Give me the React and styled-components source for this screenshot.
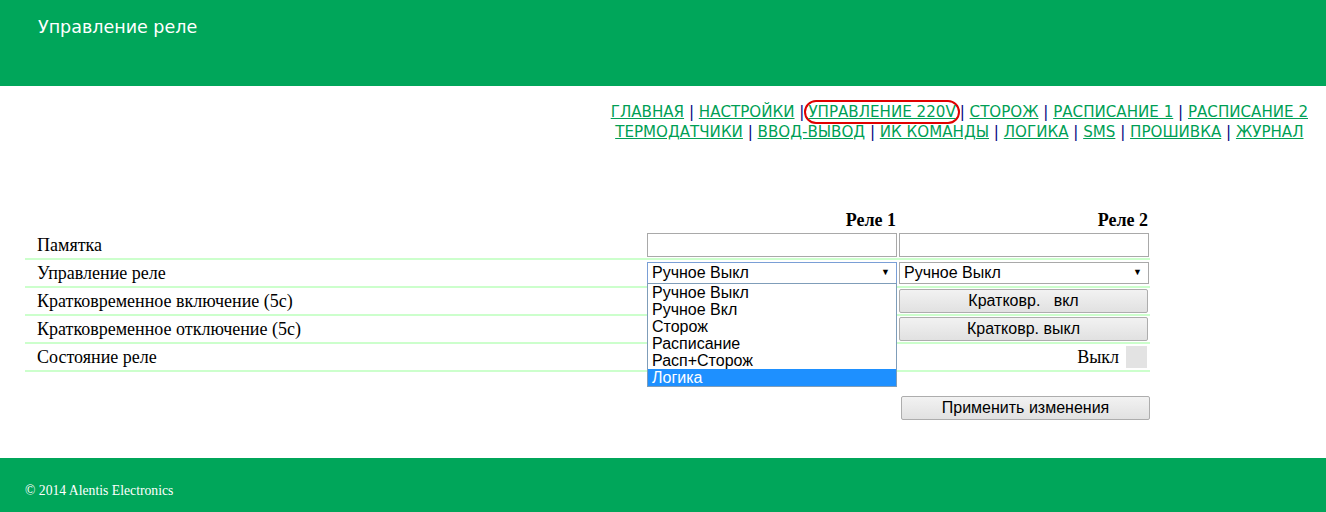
import React from "react";
import styled, { createGlobalStyle } from "styled-components";

const GREEN = "#00a65a";
const LINK = "#009f55";
const ROW_LINE = "#ccffcc";

const Global = createGlobalStyle`
  html, body { margin: 0; padding: 0; background: #fff; }
  body { font-family: "Liberation Serif", "Times New Roman", serif; color: #000; }
`;

const Page = styled.div`
  width: 1326px;
  min-height: 512px;
  display: flex;
  flex-direction: column;
`;

const Header = styled.header`
  height: 86px;
  background: ${GREEN};
  box-sizing: border-box;
  padding: 16px 0 0 38px;
`;

const Title = styled.h1`
  margin: 0;
  font-family: "DejaVu Sans", Tahoma, sans-serif;
  font-weight: normal;
  font-size: 17.5px;
  line-height: 22px;
  color: #fff;
`;

const NavWrap = styled.div`
  display: flex;
  justify-content: flex-end;
  padding: 16px 18px 0 0;
`;

const Nav = styled.nav`
  text-align: center;
  font-family: "DejaVu Sans", Tahoma, sans-serif;
  font-size: 15.1px;
  line-height: 20px;
  color: #000080;
`;

const NavLink = styled.a`
  color: ${LINK};
  text-decoration: underline;
  cursor: pointer;
  ${(p) =>
    p.$active &&
    `
    border: 2px solid #e00000;
    border-radius: 12px;
    padding: 1px 2px;
  `}
`;

const Sep = styled.span`
  color: #000080;
`;

const Main = styled.main`
  padding: 67px 0 0 25px;
  flex: 1;
`;

const Grid = styled.div`
  width: 1125px;
  display: grid;
  grid-template-columns: 621px 252px 252px;
`;

const Row = styled.div`
  display: contents;
`;

const Cell = styled.div`
  box-sizing: border-box;
  height: ${(p) => (p.$head ? "23px" : "28px")};
  border-bottom: ${(p) => (p.$head ? "0" : `2px solid ${ROW_LINE}`)};
  display: flex;
  align-items: center;
  justify-content: ${(p) => (p.$right ? "flex-end" : "flex-start")};
  padding: ${(p) => (p.$label ? "0 0 0 12px" : "0 1px")};
  font-size: 18px;
  position: relative;
`;

const HeadText = styled.span`
  font-weight: bold;
  font-size: 18px;
  padding-right: 1px;
`;

const TextInput = styled.input`
  box-sizing: border-box;
  width: 250px;
  height: 24px;
  border: 1px solid #a9a9a9;
  padding: 0 4px;
  font-family: "Liberation Sans", Arial, sans-serif;
  font-size: 16px;
  outline: none;
`;

const FakeSelect = styled.div`
  box-sizing: border-box;
  width: 250px;
  height: 22px;
  margin-top: -1px;
  border: 1px solid ${(p) => (p.$focus ? "#7a9fd6" : "#a9a9a9")};
  display: flex;
  align-items: center;
  justify-content: space-between;
  padding: 0 6px 0 4px;
  font-family: "Liberation Sans", Arial, sans-serif;
  font-size: 16px;
  background: #fff;
`;

const Arrow = styled.span`
  font-size: 9px;
  line-height: 1;
`;

const DropList = styled.ul`
  position: absolute;
  left: 1px;
  top: 23px;
  width: 250px;
  box-sizing: border-box;
  margin: 0;
  padding: 0;
  list-style: none;
  background: #fff;
  border: 1px solid #7f9db9;
  z-index: 5;
  font-family: "Liberation Sans", Arial, sans-serif;
  font-size: 16px;
`;

const Option = styled.li`
  height: 17px;
  line-height: 17px;
  padding: 0 4px;
  background: ${(p) => (p.$selected ? "#1e90ff" : "transparent")};
  color: ${(p) => (p.$selected ? "#fff" : "#000")};
`;

const Button = styled.button`
  box-sizing: border-box;
  width: 249px;
  height: 24px;
  border: 1px solid #adadad;
  border-radius: 2px;
  background: linear-gradient(#f2f2f2, #e1e1e1);
  font-family: "Liberation Sans", Arial, sans-serif;
  font-size: 16px;
  color: #000;
  white-space: pre;
  padding: 0;
`;

const State = styled.span`
  display: flex;
  align-items: center;
  gap: 7px;
  font-size: 18px;
`;

const Lamp = styled.span`
  width: 21px;
  height: 22px;
  background: #e3e3e3;
  margin-right: 2px;
`;

const ApplyRow = styled.div`
  width: 1125px;
  display: flex;
  justify-content: flex-end;
  padding-top: 24px;
`;

const Footer = styled.footer`
  height: 54px;
  background: ${GREEN};
  box-sizing: border-box;
  padding: 25px 0 0 25px;
  color: #fff;
  font-family: "Liberation Serif", "Times New Roman", serif;
  font-size: 13.7px;
`;

const links1 = ["ГЛАВНАЯ", "НАСТРОЙКИ", "УПРАВЛЕНИЕ 220V", "СТОРОЖ", "РАСПИСАНИЕ 1", "РАСПИСАНИЕ 2"];
const links2 = ["ТЕРМОДАТЧИКИ", "ВВОД-ВЫВОД", "ИК КОМАНДЫ", "ЛОГИКА", "SMS", "ПРОШИВКА", "ЖУРНАЛ"];
const options = ["Ручное Выкл", "Ручное Вкл", "Сторож", "Расписание", "Расп+Сторож", "Логика"];

function NavLine({ items }) {
  return items.map((t, i) => {
    const active = t === "УПРАВЛЕНИЕ 220V";
    const prevActive = items[i - 1] === "УПРАВЛЕНИЕ 220V";
    return (
      <React.Fragment key={t}>
        {i > 0 && <Sep>{active ? " |" : prevActive ? "| " : " | "}</Sep>}
        <NavLink $active={active}>{t}</NavLink>
      </React.Fragment>
    );
  });
}

export default function App() {
  return (
    <Page>
      <Global />
      <Header>
        <Title>Управление реле</Title>
      </Header>
      <NavWrap>
        <Nav>
          <NavLine items={links1} />
          <br />
          <NavLine items={links2} />
        </Nav>
      </NavWrap>
      <Main>
        <Grid>
          <Row>
            <Cell $head />
            <Cell $head $right><HeadText>Реле 1</HeadText></Cell>
            <Cell $head $right><HeadText>Реле 2</HeadText></Cell>
          </Row>
          <Row>
            <Cell $label>Памятка</Cell>
            <Cell><TextInput /></Cell>
            <Cell><TextInput /></Cell>
          </Row>
          <Row>
            <Cell $label>Управление реле</Cell>
            <Cell>
              <FakeSelect $focus>
                <span>Ручное Выкл</span>
                <Arrow>▼</Arrow>
              </FakeSelect>
              <DropList>
                {options.map((o) => (
                  <Option key={o} $selected={o === "Логика"}>{o}</Option>
                ))}
              </DropList>
            </Cell>
            <Cell>
              <FakeSelect>
                <span>Ручное Выкл</span>
                <Arrow>▼</Arrow>
              </FakeSelect>
            </Cell>
          </Row>
          <Row>
            <Cell $label>Кратковременное включение (5с)</Cell>
            <Cell />
            <Cell><Button>{"Кратковр.   вкл"}</Button></Cell>
          </Row>
          <Row>
            <Cell $label>Кратковременное отключение (5с)</Cell>
            <Cell />
            <Cell><Button>Кратковр. выкл</Button></Cell>
          </Row>
          <Row>
            <Cell $label>Состояние реле</Cell>
            <Cell />
            <Cell $right>
              <State>Выкл<Lamp /></State>
            </Cell>
          </Row>
        </Grid>
        <ApplyRow>
          <Button>Применить изменения</Button>
        </ApplyRow>
      </Main>
      <Footer>© 2014 Alentis Electronics</Footer>
    </Page>
  );
}
